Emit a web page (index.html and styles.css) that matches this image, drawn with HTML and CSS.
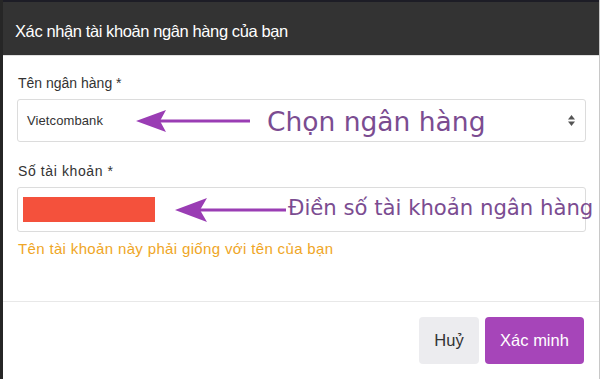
FILE: index.html
```html
<!DOCTYPE html>
<html lang="vi">
<head>
<meta charset="utf-8">
<title>Xác nhận tài khoản ngân hàng</title>
<link rel="stylesheet" href="styles.css">
</head>
<body>
<div class="modal">
  <div class="modal-header">
    <h1 class="modal-title">Xác nhận tài khoản ngân hàng của bạn</h1>
  </div>
  <div class="modal-body">
    <div class="group">
      <label class="label">Tên ngân hàng *</label>
      <div class="control select">
        <span class="value">Vietcombank</span>
        <svg class="arrow arrow-1" width="115" height="24" viewBox="0 0 115 24">
          <line x1="20" y1="12" x2="114" y2="12" stroke="#9a3db4" stroke-width="3"/>
          <polygon points="0,12 30,1 24,12 30,23" fill="#9a3db4"/>
        </svg>
        <span class="note note-1">Chọn ngân hàng</span>
        <svg class="spinner" width="7" height="11" viewBox="0 0 7 11">
          <polygon points="3.5,0 7,4.5 0,4.5" fill="#555"/>
          <polygon points="0,6.5 7,6.5 3.5,11" fill="#555"/>
        </svg>
      </div>
    </div>
    <div class="group group-2">
      <label class="label label-2">Số tài khoản *</label>
      <div class="control input">
        <span class="redacted"></span>
        <svg class="arrow arrow-2" width="112" height="26" viewBox="0 0 112 26">
          <line x1="20" y1="13" x2="111" y2="13" stroke="#9a3db4" stroke-width="3"/>
          <polygon points="0,13 32,1 25,13 32,25" fill="#9a3db4"/>
        </svg>
        <span class="note note-2">Điền số tài khoản ngân hàng</span>
      </div>
      <p class="help">Tên tài khoản này phải giống với tên của bạn</p>
    </div>
  </div>
  <div class="modal-footer">
    <button class="btn btn-cancel">Huỷ</button>
    <button class="btn btn-primary">Xác minh</button>
  </div>
</div>
</body>
</html>
```

FILE: styles.css
```css
html, body {
  margin: 0;
  padding: 0;
  background: #ffffff;
}

body {
  font-family: "Liberation Sans", Arial, sans-serif;
  color: #333333;
}

.modal {
  width: 596px;
  height: 379px;
  border-left: 3px solid #262626;
  border-right: 1px solid #c8c8c8;
  display: flex;
  flex-direction: column;
  background: #ffffff;
}

.modal-header {
  background: #333333;
  border-top: 2px solid #1d1d26;
  display: flex;
  align-items: center;
  padding-left: 12px;
  padding-top: 6px;
  box-sizing: border-box;
  height: 56px;
  border-bottom: 1px solid #e0e0e0;
}

.modal-title {
  margin: 0;
  font-size: 16.5px;
  font-weight: normal;
  color: #ffffff;
  letter-spacing: -0.4px;
}

.modal-body {
  padding: 18px 13px 0 14px;
  flex: 1;
}

.group {
  display: flex;
  flex-direction: column;
}

.group-2 {
  margin-top: 20px;
}

.label {
  font-size: 14px;
  line-height: 17px;
  color: #333333;
  margin-left: 1px;
  margin-top: 1px;
}

.label-2 {
  letter-spacing: 0.6px;
}

.control {
  margin-top: 7px;
  border: 1px solid #dcdcdc;
  border-radius: 3px;
  display: flex;
  align-items: center;
  box-sizing: border-box;
}

.select {
  height: 43px;
  padding: 0 8px 0 9px;
}

.value {
  font-size: 13px;
  color: #333333;
  width: 79px;
  letter-spacing: 0.1px;
}

.arrow-1 {
  margin-left: 30px;
  flex: none;
}

.note {
  font-family: "DejaVu Sans", Verdana, sans-serif;
  color: #7b4c91;
  white-space: nowrap;
}

.note-1 {
  font-size: 26.5px;
  margin-left: 16px;
  margin-top: 2px;
  flex: 1;
}

.spinner {
  flex: none;
  margin-right: 2px;
}

.input {
  height: 45px;
  padding: 0 0 0 5px;
  overflow: visible;
}

.redacted {
  width: 132px;
  height: 25px;
  background: #f4513c;
  flex: none;
}

.arrow-2 {
  margin-left: 20px;
  flex: none;
}

.note-2 {
  font-size: 21.2px;
  margin-left: 1px;
  margin-top: -4px;
}

.help {
  margin: 8px 0 0 1px;
  font-size: 15px;
  letter-spacing: 0.35px;
  color: #efa626;
}

.modal-footer {
  height: 78px;
  border-top: 1px solid #e8e8e8;
  display: flex;
  justify-content: flex-end;
  align-items: center;
  padding-right: 15px;
  gap: 6px;
  box-sizing: border-box;
  padding-bottom: 1px;
}

.btn {
  font-family: "Liberation Sans", Arial, sans-serif;
  font-size: 16.5px;
  height: 47px;
  border: none;
  border-radius: 4px;
  cursor: pointer;
}

.btn-cancel {
  width: 60px;
  background: #ececef;
  color: #333333;
}

.btn-primary {
  width: 99px;
  background: #a645b9;
  color: #ffffff;
}
```
